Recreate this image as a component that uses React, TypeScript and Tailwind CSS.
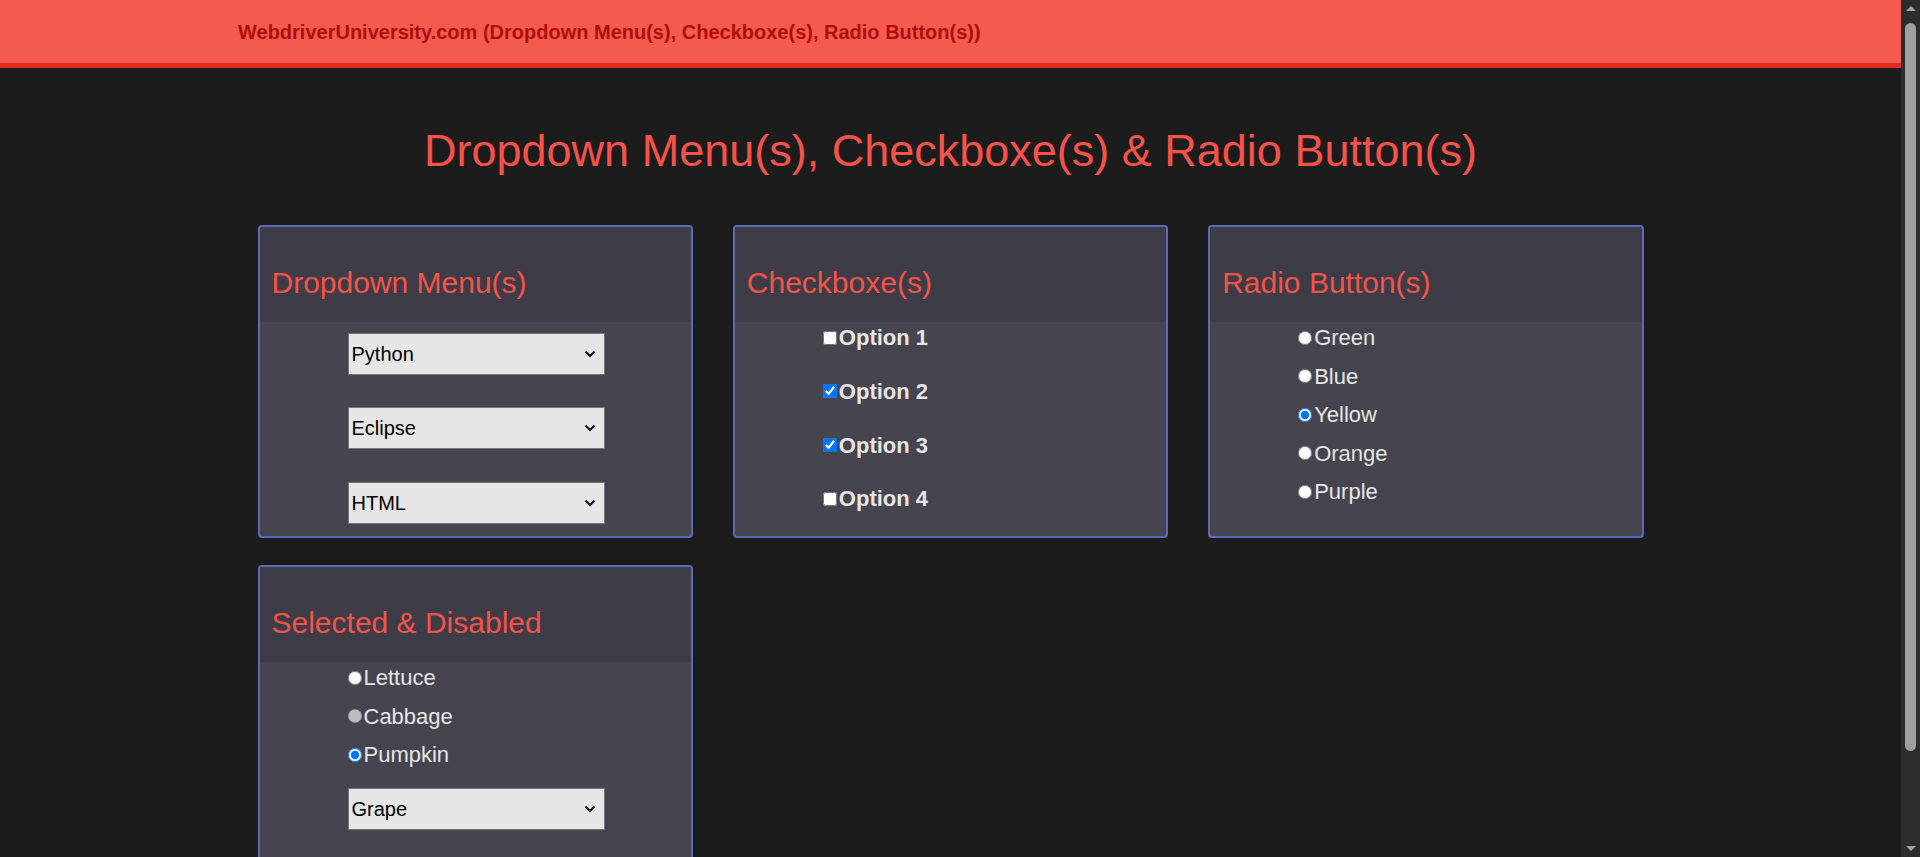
import React from 'react';

const font = { fontFamily: '"Liberation Sans", Arial, sans-serif' };

const Card: React.FC<{ title: string; children: React.ReactNode }> = ({ title, children }) => (
  <div className="flex flex-col rounded-[4px] border-2 border-[#5c6bb8] bg-[#46454f] overflow-hidden">
    <div className="h-[95px] shrink-0 bg-[#3d3c47] pl-[12px] pt-[39px]">
      <h2 className="text-[30px] leading-[1.15] font-normal text-[#f5534a]">{title}</h2>
    </div>
    <div className="pl-[88px]">{children}</div>
  </div>
);

const Select: React.FC<{ value: string; options: string[] }> = ({ value, options }) => (
  <div className="relative h-[42px] w-[257px]">
    <select
      defaultValue={value}
      className="h-full w-full appearance-none border border-[#767676] bg-[#e6e6e6] pl-[3px] text-[20px] text-black"
    >
      {options.map((o) => (
        <option key={o} value={o}>
          {o}
        </option>
      ))}
    </select>
    {/* chevron */}
    <svg
      className="pointer-events-none absolute right-[9px] top-[17px]"
      width="12"
      height="8"
      viewBox="0 0 12 8"
      fill="none"
    >
      <path d="M1.5 1.5 L6 6 L10.5 1.5" stroke="#111" strokeWidth="2" />
    </svg>
  </div>
);

const Radio: React.FC<{ label: string; name: string; checked?: boolean; disabled?: boolean }> = ({
  label,
  name,
  checked,
  disabled,
}) => (
  <label className="flex h-[25.3px] items-center text-[22px] leading-[1.15] text-[#e6e6e6]">
    <input
      type="radio"
      name={name}
      defaultChecked={checked}
      disabled={disabled}
      className="m-0 mr-[2px] h-[14px] w-[14px]"
    />
    {label}
  </label>
);

const Check: React.FC<{ label: string; checked?: boolean }> = ({ label, checked }) => (
  <label className="flex h-[25.3px] items-center text-[22px] leading-[1.15] font-bold text-[#e6e6e6]">
    <input type="checkbox" defaultChecked={checked} className="m-0 mr-[2px] h-[14px] w-[14px]" />
    {label}
  </label>
);

const Scrollbar = () => (
  <div className="flex h-full w-[19px] shrink-0 flex-col items-center bg-[#2c2c2c]">
    <svg width="12" height="17" viewBox="0 0 12 17" className="shrink-0">
      <path d="M1 11 L6 6 L11 11 Z" fill="#a3a3a3" />
    </svg>
    <div className="mt-[6px] h-[728px] w-[11px] rounded-full bg-[#9f9f9f]" />
    <div className="flex-1" />
    <svg width="12" height="17" viewBox="0 0 12 17" className="shrink-0">
      <path d="M1 6 L6 11 L11 6 Z" fill="#a3a3a3" />
    </svg>
  </div>
);

export default function App() {
  return (
    <div className="flex h-screen overflow-hidden bg-[#1c1c1c]" style={font}>
      <div className="min-w-0 flex-1 overflow-hidden">
        <div className="pb-[90px]">
          {/* top nav bar */}
          <div className="flex h-[68px] items-center border-b-[5px] border-[#e52b21] bg-[#f55a4f] pl-[238px]">
            <span className="text-[20px] font-bold text-[#b20d0d]">
              WebdriverUniversity.com (Dropdown Menu(s), Checkboxe(s), Radio Button(s))
            </span>
          </div>

          <h1 className="mt-[57px] text-center text-[45px] leading-[1.15] font-normal text-[#f5534a]">
            Dropdown Menu(s), Checkboxe(s) &amp; Radio Button(s)
          </h1>

          <div className="mx-auto mt-[48px] grid w-[1386px] grid-cols-3 gap-x-[40px] gap-y-[27px]">
            <Card title="Dropdown Menu(s)">
              <div className="flex flex-col gap-[32.5px] pt-[11px] pb-[12px]">
                <Select value="Python" options={['JAVA', 'C#', 'Python', 'SQL']} />
                <Select value="Eclipse" options={['Eclipse', 'Maven', 'TestNG', 'JUnit']} />
                <Select value="HTML" options={['HTML', 'CSS', 'JavaScript', 'JQuery']} />
              </div>
            </Card>

            <Card title="Checkboxe(s)">
              <div className="flex flex-col gap-[28.4px] pt-[3.4px]">
                <Check label="Option 1" />
                <Check label="Option 2" checked />
                <Check label="Option 3" checked />
                <Check label="Option 4" />
              </div>
            </Card>

            <Card title="Radio Button(s)">
              <div className="flex flex-col gap-[13.2px] pt-[3.4px]">
                <Radio name="color" label="Green" />
                <Radio name="color" label="Blue" />
                <Radio name="color" label="Yellow" checked />
                <Radio name="color" label="Orange" />
                <Radio name="color" label="Purple" />
              </div>
            </Card>

            <Card title="Selected & Disabled">
              <div className="flex flex-col gap-[13.2px] pt-[3.4px]">
                <Radio name="veg" label="Lettuce" />
                <Radio name="veg" label="Cabbage" disabled />
                <Radio name="veg" label="Pumpkin" checked />
              </div>
              <div className="pt-[21px] pb-[52px]">
                <Select value="Grape" options={['Apple', 'Orange', 'Pear', 'Grape']} />
              </div>
            </Card>
          </div>
        </div>
      </div>
      <Scrollbar />
    </div>
  );
}
